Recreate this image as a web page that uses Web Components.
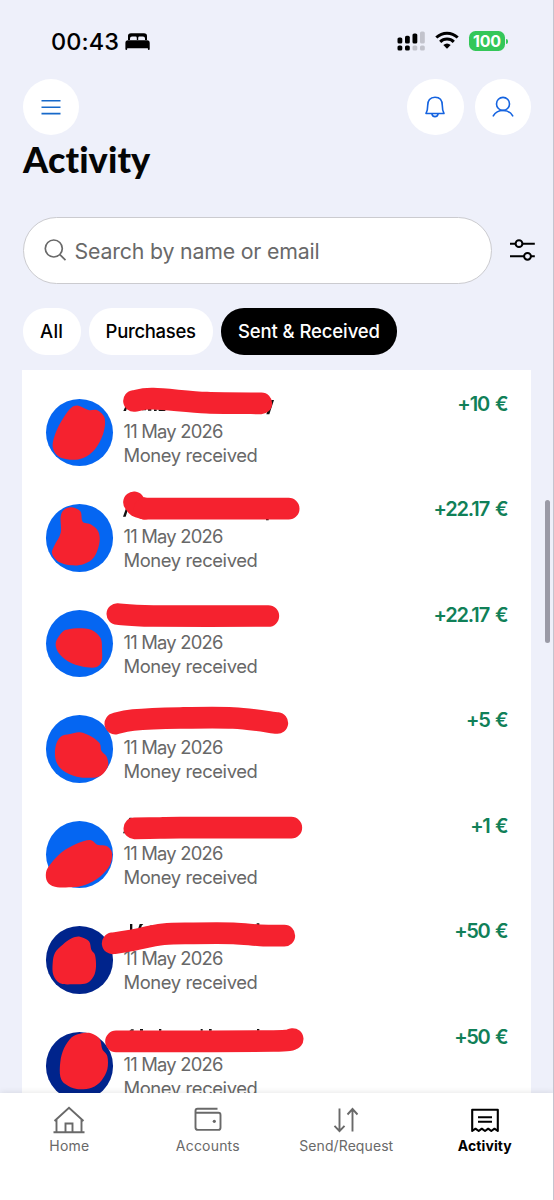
<!DOCTYPE html>
<html lang="en">
<head>
<meta charset="utf-8">
<title>Activity</title>
<style>
html,body{margin:0;height:100%;overflow:hidden;background:#eef0fa}
body{font-family:Inter,"Liberation Sans",sans-serif}
</style>
</head>
<body>
<activity-screen></activity-screen>
<script>
const define = (name, html, setup) => customElements.define(name, class extends HTMLElement {
  connectedCallback() {
    if (this.shadowRoot) return;
    const root = this.attachShadow({mode: 'open'});
    root.innerHTML = typeof html === 'function' ? html(this) : html;
    if (setup) setup(this, root);
  }
});

// Smooth curve through a list of points.
function curve(str, closed) {
  const p = str.trim().split(/\s+/).map(s => s.split(',').map(Number)), n = p.length;
  const at = i => closed ? p[(i + n) % n] : p[Math.max(0, Math.min(n - 1, i))];
  let d = `M${p[0]}`;
  for (let i = 0; i < (closed ? n : n - 1); i++) {
    const a = at(i - 1), b = at(i), c = at(i + 1), e = at(i + 2);
    d += `C${b[0] + (c[0] - a[0]) / 6},${b[1] + (c[1] - a[1]) / 6} ${c[0] - (e[0] - b[0]) / 6},${c[1] - (e[1] - b[1]) / 6} ${c}`;
  }
  return d + (closed ? 'Z' : '');
}

// Single-line text tracked to a given width.
define('fit-text', `<style>:host{display:block;white-space:nowrap;line-height:inherit}span{display:inline-block}</style><span><slot></slot></span>`, (host, root) => {
  const span = root.querySelector('span'), w = +host.getAttribute('w'), n = host.textContent.length;
  const ls = (w - span.getBoundingClientRect().width) / n;
  span.style.letterSpacing = ls + 'px';
  span.style.marginRight = -ls + 'px';
});

define('status-bar', `<style>
:host{display:flex;height:78.500px;box-sizing:border-box;padding:29px 46px 0 51px;align-items:flex-start}
.time{font-size:23.5px;font-weight:500;line-height:26px;color:#000}
svg{display:block;flex:none}.bed{margin:4px 0 0 6px}.sp{flex:1}
.sig{margin-top:2px}.wifi{margin:2px 0 0 9px}
.bat{margin:2px 0 0 10px;width:36px;height:20px;border-radius:6.5px;background:#34c759;color:#fff;font-size:16px;font-weight:700;line-height:20px;display:flex;justify-content:center}
.nub{width:2px;height:5px;margin:10px 0 0 1px;background:#34c759;border-radius:0 2px 2px 0}
</style>
<fit-text class="time" w="68">00:43</fit-text>
<svg class="bed" width="25" height="18" viewBox="0 0 25 18"><path d="M3 7V3Q3 .3 6 .3h13Q22 .3 22 3v4h-2V5.5Q20 3.6 18 3.6h-3.6Q13.2 3.6 13.2 5v2h-1.4V5q0-1.4-1.2-1.4H7Q5 3.600 5 5.500V7ZM3 7.200H22Q24.700 7.200 24.700 10V16q0 1-.9 1t-.9-1v-.8H2.200V16q0 1-.9 1t-.9-1v-6Q.4 7.200 3 7.200Z"/></svg>
<span class="sp"></span>
<svg class="sig" width="29" height="20" viewBox="0 0 29 20"><g fill="#000"><rect x=".5" y="6.500" width="4.800" height="6" rx="1.600"/><rect x="8" y="4.700" width="4.800" height="7.800" rx="1.600"/><rect x="15.500" y="2.500" width="4.800" height="10" rx="1.600"/><rect x=".5" y="14.500" width="4.800" height="5" rx="1.600"/><rect x="8" y="14.500" width="4.800" height="5" rx="1.600"/></g><g fill="#c2c3cc"><rect x="23" y=".5" width="4.800" height="12" rx="1.600"/><rect x="15.500" y="14.500" width="4.800" height="5" rx="1.600"/><rect x="23" y="14.500" width="4.800" height="5" rx="1.600"/></g></svg>
<svg class="wifi" width="24" height="18" viewBox="0 0 24 18" fill="none" stroke="#000" stroke-width="3"><path d="M1.300 6.500Q6 2.200 12 2.200T22.700 6.500M5.200 10.900Q8 8.100 12 8.100t6.800 2.800"/><path d="M8.300 14Q12 10.900 15.700 14L12 17.800Z" fill="#000" stroke="none"/></svg>
<div class="bat"><fit-text w="28">100</fit-text></div><span class="nub"></span>`);

define('round-button', `<style>:host{display:grid;place-items:center;width:56.500px;height:56.500px;border-radius:50%;background:#fff;flex:none}::slotted(svg){display:block}</style><slot></slot>`);

define('page-header', `<style>
:host{display:block;height:138px;padding:0 23px 0 22.500px}
.row{display:flex;gap:11px;height:56px}.sp{flex:1}
h1{margin:1px 0 0 .5px;font:900 36px/46px Lato,sans-serif;color:#050505}
</style>
<div class="row">
<round-button><svg width="20" height="18" viewBox="0 0 20 18" stroke="#1769c9" stroke-width="1.600"><path d="M.5 2.700H19.500M.5 9.200H19.500M.5 15.600H19.500"/></svg></round-button>
<span class="sp"></span>
<round-button><svg width="22" height="24" viewBox="0 0 22 24" fill="none" stroke="#1463e0" stroke-width="1.600" stroke-linejoin="round"><path d="M2 18.500Q3.700 15.500 3.700 10.500C3.700 5.500 6 2.300 11 2.300s7.300 3.200 7.300 8.200q0 5 1.700 8ZM7.800 18.700q.7 2.900 3.200 2.900t3.200-2.900"/></svg></round-button>
<round-button><svg width="24" height="24" viewBox="0 0 24 24" fill="none" stroke="#1463e0" stroke-width="1.600" stroke-linecap="round"><circle cx="12" cy="8.900" r="6.500"/><path d="M2.300 20.900Q5.300 15.500 12 15.500t9.700 5.400"/></svg></round-button>
</div>
<h1><fit-text w="128">Activity</fit-text></h1>`);

define('search-row', `<style>
:host{display:flex;align-items:center;padding:0 17px 0 22.500px;height:67px}
.box{box-sizing:border-box;width:469px;height:67px;border:1.500px solid #cbcbcf;border-radius:34px;background:#fff;display:flex;align-items:center;padding-left:20px;color:#696969;font-size:21.300px;line-height:28px}
.box fit-text{margin:1px 0 0 8px}
svg{display:block;flex:none}.f{margin-left:17px}
</style>
<div class="box"><svg width="23" height="23" viewBox="0 0 23 23" fill="none" stroke="#696969" stroke-width="1.700"><circle cx="9.800" cy="9.500" r="8.500"/><path d="M15.900 15.600 21.500 21.200"/></svg><fit-text w="245">Search by name or email</fit-text></div>
<svg class="f" width="27" height="24" viewBox="0 0 27 24" fill="none" stroke="#000" stroke-width="2"><path d="M1 5.700H6.500M13.500 5.700H25.800M1 18.300H15M22 18.300H25.800"/><circle cx="10" cy="5.700" r="3.400"/><circle cx="18.500" cy="18.300" r="3.400"/></svg>`);

define('filter-chip', `<style>:host{display:flex;align-items:center;justify-content:center;height:47px;border-radius:23px;background:#fff;color:#000;font-size:18.500px;font-weight:500;box-sizing:border-box;flex:none}:host([on]){background:#000;color:#fff}</style><slot></slot>`);

define('money-row', host => `<style>
:host{display:grid;grid-template-columns:68px 1fr auto;height:105.600px;box-sizing:border-box;padding:29px 22.500px 0 23.500px;column-gap:10px}
.av{width:67.500px;height:67.500px;border-radius:50%;background:${host.getAttribute('color')}}
.t{padding-top:20px;font-size:18.400px;line-height:24px;color:#686868}
.a{margin-top:-9px;font-size:20px;line-height:28px;font-weight:600;color:#108058;word-spacing:2px}
</style><div class="av"></div><div class="t"><fit-text w="99">11 May 2026</fit-text><fit-text w="134">Money received</fit-text></div><fit-text class="a" w="${host.getAttribute('w')}">${host.getAttribute('amount')}</fit-text>`);

const marks = [
 {y:370, bars:['342,93 400,86 560,98 724,100'], blobs:['175,107 205,120 232,121 254,145 250,190 225,238 190,264 150,269 115,259 98,230 107,188 130,144 153,114'], ink:'M310,123L318,105H324L318,123ZM366,116h12v5h-12zM384,117h10v5h-10zM402,118h8v5h-8zM416,118h20v5h-20zM754,90h8l-14,43h-9l4-12z'},
 {y:370, bars:['342,397 352,409 374,416','374,416 806,416'], blobs:['154,412 181,424 188,455 212,463 235,485 238,520 222,562 192,582 155,586 115,575 96,550 104,525 122,488 122,440 132,419'], ink:'M309,440L319,412H326L317,440ZM738,444h8v7h-8z'},
 {y:590, bars:['292,72 400,78 745,78'], blobs:['177,115 215,120 242,145 246,180 245,213 230,231 200,232 155,220 119,193 107,160 127,126 150,117'], ink:''},
 {y:590, bars:['286,401 340,390 480,384 640,384 772,399'], blobs:['180,427 215,440 239,460 244,482 260,500 264,528 246,554 220,563 170,560 128,541 107,510 107,468 122,440 150,432'], ink:''},
 {y:800, bars:['343,85 420,84 480,83 814,83'], blobs:['210,120 232,134 260,138 276,158 270,195 240,230 195,255 155,262 105,260 82,245 78,218 90,194 125,157 168,132'], ink:'M309,100l3-7h7v7zM326,57l3-4h6v4z'},
 {y:800, bars:['278,430 330,422 430,403 520,400 640,400 720,406 793,407'], blobs:['180,410 207,424 214,449 225,465 228,500 221,529 200,550 160,553 120,550 100,525 98,490 105,458 128,434 155,415'], ink:'M330,372h7v20h-7zM354,388l5-16h11l-5 5-2 11zM382,385v-5l12-4 7 8zM417,372h7v10h-7zM710,370h8v7h-8z'},
 {y:1000, bars:['288,124 400,124 760,123 818,117'], blobs:['180,101 213,100 239,117 247,148 262,169 262,208 244,242 215,263 170,267 137,253 121,230 121,185 132,145 155,112'], ink:'M328,92l6-4h7v4zM360,92v-5h9v5zM417,87h7v5h-7zM542,87h6v5h-6zM567,87h8v5h-8zM711,87h7v5h-7z'}
];

define('activity-list', () => {
  const rows = [['+10 €',50],['+22.17 €',74],['+22.17 €',74],['+5 €',41],['+1 €',37],['+50 €',53],['+50 €',53]]
    .map(([a, w], i) => `<money-row amount="${a}" w="${w}" color="${i < 5 ? '#0566f2' : '#00248c'}"></money-row>`).join('');
  const scribbles = marks.map(m => `<g transform="translate(20 ${m.y}) scale(.33333)"><path d="${m.ink}" fill="#111"/>` +
    m.bars.map(b => `<path d="${curve(b)}" fill="none" stroke="#f5222f" stroke-width="65" stroke-linecap="round" stroke-linejoin="round"/>`).join('') +
    m.blobs.map(b => `<path d="${curve(b, true)}" fill="#f5222f"/>`).join('') + '</g>').join('');
  return `<style>
:host{display:block;position:relative;box-sizing:border-box;width:509px;height:723px;margin:15.500px 0 0 22px;background:#fff;overflow:hidden}
svg{position:absolute;left:0;top:0}
</style>${rows}<svg width="509" height="723" viewBox="22 370 509 723">${scribbles}</svg>`;
});

define('nav-item', `<style>
:host{display:flex;flex:1 1 0;flex-direction:column;align-items:center;color:#696969;font-size:14px;line-height:18px}
:host([on]){color:#000;font-weight:700}
::slotted(svg){display:block;margin-bottom:2px}
</style><slot></slot>`);

define('bottom-nav', `<style>
:host{display:flex;position:relative;height:107px;box-sizing:border-box;padding-top:12px;background:#fff;box-shadow:0 -1px 6px rgba(0,0,0,.09)}
</style>
<nav-item><svg width="32" height="30" viewBox="0 0 32 30" fill="none" stroke="#696969" stroke-width="1.900"><path d="M.5 27.300H31.500M3.500 27V14.500M28.500 27V14.500M1.500 16 16 2.800 30.500 16M12.500 27V18.500h7V27"/></svg><fit-text w="40">Home</fit-text></nav-item>
<nav-item><svg width="30" height="30" viewBox="0 0 30 30" fill="none" stroke="#696969" stroke-width="1.900" stroke-linejoin="round"><path d="M24.500 3.800H4.500Q2.500 3.800 2.500 6V22.500Q2.500 24.900 5 24.900H25.500Q27.500 24.900 27.500 22.500V10Q27.500 7.800 25.500 7.800H2.500"/><circle cx="21.300" cy="16.300" r="1.600" fill="#696969" stroke="none"/></svg><fit-text w="64">Accounts</fit-text></nav-item>
<nav-item><svg width="26" height="30" viewBox="0 0 26 30" fill="none" stroke="#696969" stroke-width="1.900"><path d="M6.500 3.500V26M1.500 20.800 6.500 26.200 11.500 20.800M19.500 26.500V4M14.500 9.500 19.500 4 24.500 9.500"/></svg><fit-text w="94">Send/Request</fit-text></nav-item>
<nav-item on><svg width="30" height="30" viewBox="0 0 30 30" fill="none" stroke="#000" stroke-width="2.100" stroke-linejoin="round"><path d="M2.200 4.700H27.800V26L24.500 23.700 21.300 26 18.200 23.700 15 26 11.800 23.700 8.700 26 5.500 23.700 2.200 26ZM8 12.300H22M8 16.800H22"/></svg><fit-text w="54">Activity</fit-text></nav-item>`);

define('activity-screen', `<style>
:host{display:block;position:relative;width:554px;height:1200px;overflow:hidden;background:#eef0fa}
.chips{display:flex;gap:8px;padding:24px 0 0 22.500px}
.bar{position:absolute;left:545px;top:500px;width:5px;height:143px;border-radius:3px;background:#9a9aa6}
.edge{position:absolute;right:0;top:0;bottom:0;width:1px;background:#c4c4cf}
</style>
<status-bar></status-bar>
<page-header></page-header>
<search-row></search-row>
<div class="chips">
<filter-chip style="width:58px"><fit-text w="23">All</fit-text></filter-chip>
<filter-chip style="width:124.500px"><fit-text w="90">Purchases</fit-text></filter-chip>
<filter-chip on style="width:176px"><fit-text w="142">Sent &amp; Received</fit-text></filter-chip>
</div>
<activity-list style="margin-top:15px"></activity-list>
<bottom-nav></bottom-nav>
<div class="bar"></div><div class="edge"></div>`);
</script>
</body>
</html>
